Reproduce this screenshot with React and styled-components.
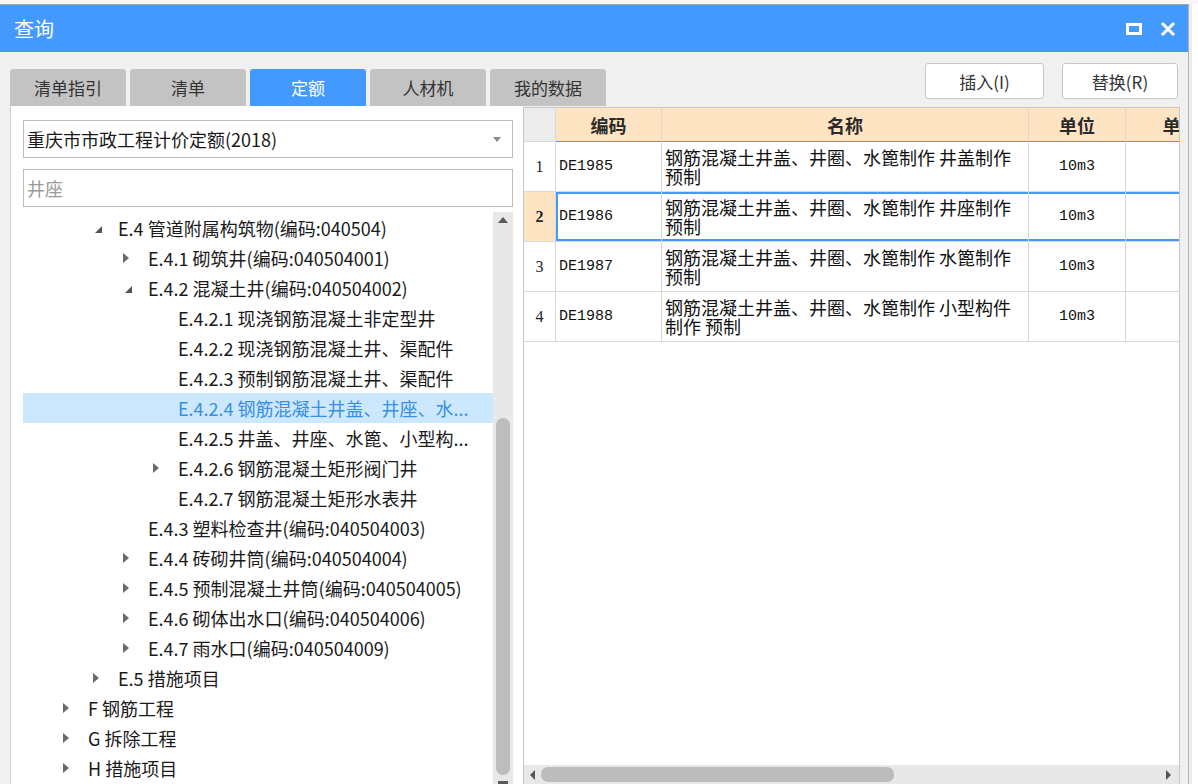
import React from "react";
import styled, { createGlobalStyle } from "styled-components";

const GlobalStyle = createGlobalStyle`
  body {
    margin: 0;
    background: #fafafa;
    font-family: "Noto Sans CJK SC", "Noto Sans", sans-serif;
  }
`;

const Screen = styled.div`
  width: 1198px;
  height: 784px;
  overflow: hidden;
  display: flex;
  padding-top: 4px;
  box-sizing: border-box;
  background: #f7f7f7;
`;

const Dialog = styled.div`
  width: 1189px;
  flex-shrink: 0;
  display: flex;
  flex-direction: column;
  border-top: 1px solid #a8a8a8;
  border-right: 1px solid #b4b4b4;
  box-sizing: border-box;
`;

const Backdrop = styled.div`
  flex: 1;
  background: #ffffff;
  border-left: 3px solid #ececec;
`;

const TitleBar = styled.div`
  height: 47px;
  flex-shrink: 0;
  background: #4499ff;
  display: flex;
  align-items: center;
  justify-content: space-between;
  padding: 0 12px 0 14px;
`;

const Title = styled.span`
  color: #ffffff;
  font-size: 20px;
`;

const WindowButtons = styled.div`
  display: flex;
  align-items: center;
  gap: 18px;
`;

const Body = styled.div`
  flex: 1;
  min-height: 0;
  display: flex;
  flex-direction: column;
  background: #f0f0f0;
  padding: 0 8px 0 10px;
`;

const Toolbar = styled.div`
  height: 54px;
  flex-shrink: 0;
  display: flex;
  justify-content: space-between;
`;

const TabStrip = styled.div`
  align-self: flex-end;
  display: flex;
  gap: 4px;
`;

const Tab = styled.div`
  width: 116px;
  height: 37px;
  border-radius: 3px 3px 0 0;
  background: ${(p) => (p.active ? "#4499ff" : "#c3c3c3")};
  color: ${(p) => (p.active ? "#ffffff" : "#333333")};
  font-size: 17px;
  display: flex;
  align-items: center;
  justify-content: center;
`;

const ActionGroup = styled.div`
  display: flex;
  gap: 18px;
  padding: 11px 2px 0 0;
`;

const ActionButton = styled.div`
  width: ${(p) => p.w}px;
  height: 36px;
  box-sizing: border-box;
  background: #ffffff;
  border: 1px solid #c6c6c6;
  border-radius: 3px;
  color: #333333;
  font-size: 17px;
  display: flex;
  align-items: center;
  justify-content: center;
`;

const Main = styled.div`
  flex: 1;
  min-height: 0;
  display: flex;
`;

const LeftPanel = styled.div`
  width: 513px;
  flex-shrink: 0;
  box-sizing: border-box;
  background: #ffffff;
  border-left: 1px solid #d2d2d2;
  padding: 14px 10px 0 12px;
  display: flex;
  flex-direction: column;
`;

const SelectBox = styled.div`
  height: 38px;
  flex-shrink: 0;
  box-sizing: border-box;
  border: 1px solid #bdbdbd;
  display: flex;
  align-items: center;
  justify-content: space-between;
  padding: 0 11px 0 3px;
  font-size: 18px;
  color: #1a1a1a;
`;

const SearchBox = styled.div`
  height: 38px;
  flex-shrink: 0;
  margin-top: 11px;
  box-sizing: border-box;
  border: 1px solid #bdbdbd;
  display: flex;
  align-items: center;
  padding-left: 3px;
  font-size: 18px;
  color: #9b9b9b;
`;

const TreeArea = styled.div`
  flex: 1;
  min-height: 0;
  margin-top: 5px;
  display: flex;
`;

const TreeList = styled.div`
  flex: 1;
  padding-top: 1px;
  overflow: hidden;
`;

const TreeRow = styled.div`
  height: 30px;
  display: flex;
  align-items: center;
  padding-left: ${(p) => 40 + p.level * 30}px;
  background: ${(p) => (p.selected ? "#cce8ff" : "transparent")};
  color: ${(p) => (p.selected ? "#3a8ee6" : "#1a1a1a")};
`;

const Toggle = styled.span`
  width: 25px;
  flex-shrink: 0;
  display: flex;
  align-items: center;
`;

const TreeLabel = styled.span`
  font-size: 18px;
  white-space: nowrap;
`;

const VScroll = styled.div`
  width: 20px;
  flex-shrink: 0;
  background: #e8e8e8;
  display: flex;
  flex-direction: column;
  align-items: center;
`;

const ScrollArrow = styled.div`
  height: ${(p) => p.h}px;
  display: flex;
  align-items: ${(p) => (p.bottom ? "flex-end" : "center")};
  justify-content: center;
  flex-shrink: 0;
`;

const VThumb = styled.div`
  width: 14px;
  height: 357px;
  margin-top: ${(p) => p.offset}px;
  flex-shrink: 0;
  border-radius: 7px;
  background: #bdbdbd;
`;

const Grid = styled.div`
  flex: 1;
  min-width: 0;
  margin-top: 1px;
  background: #ffffff;
  border: 1px solid #c8c8c8;
  border-bottom: none;
  display: flex;
  flex-direction: column;
  overflow: hidden;
`;

const GridRow = styled.div`
  display: flex;
  height: ${(p) => p.h}px;
  flex-shrink: 0;
`;

const Cell = styled.div`
  width: ${(p) => p.w}px;
  flex-shrink: 0;
  box-sizing: border-box;
  border-right: 1px solid #d8d8d8;
  border-bottom: 1px solid #d8d8d8;
  display: flex;
  align-items: center;
  justify-content: ${(p) => (p.center ? "center" : "flex-start")};
  padding: 0 3px;
`;

const HeadCell = styled(Cell)`
  background: ${(p) => (p.corner ? "#ececec" : "#ffe4c4")};
  border-bottom-color: ${(p) => (p.corner ? "#d8d8d8" : "#4a9bff")};
  font-size: 18px;
  font-weight: 700;
  color: #2a2a2a;
  white-space: nowrap;
`;

const NumCell = styled(Cell)`
  background: ${(p) => (p.selected ? "#ffe4c4" : "#ffffff")};
  font-family: "Liberation Serif", serif;
  font-size: 16px;
  font-weight: ${(p) => (p.selected ? 700 : 400)};
  color: #222222;
`;

const DataCell = styled(Cell)`
  font-size: ${(p) => (p.mono ? 15 : 18)}px;
  font-family: ${(p) =>
    p.mono
      ? `"Liberation Mono", monospace`
      : `"Noto Sans CJK SC", sans-serif`};
  line-height: 19px;
  color: #111111;
  box-shadow: ${(p) =>
    p.selected
      ? `inset 0 2px 0 #4499ff, inset 0 -2px 0 #4499ff${
          p.first ? ", inset 2px 0 0 #4499ff" : ""
        }`
      : "none"};
`;

const GridFill = styled.div`
  flex: 1;
`;

const HScroll = styled.div`
  height: 19px;
  flex-shrink: 0;
  background: #e8e8e8;
  display: flex;
  align-items: center;
  padding: 0 8px 0 6px;
`;

const HThumb = styled.div`
  width: 353px;
  height: 15px;
  margin-left: 6px;
  border-radius: 7px;
  background: #bcbcbc;
`;

const HSpacer = styled.div`
  flex: 1;
`;

const COLS = [32, 106, 367, 97, 110];

const treeItems = [
  { level: 1, label: "E.4 管道附属构筑物(编码:040504)", toggle: "open" },
  { level: 2, label: "E.4.1 砌筑井(编码:040504001)", toggle: "closed" },
  { level: 2, label: "E.4.2 混凝土井(编码:040504002)", toggle: "open" },
  { level: 3, label: "E.4.2.1 现浇钢筋混凝土非定型井" },
  { level: 3, label: "E.4.2.2 现浇钢筋混凝土井、渠配件" },
  { level: 3, label: "E.4.2.3 预制钢筋混凝土井、渠配件" },
  { level: 3, label: "E.4.2.4 钢筋混凝土井盖、井座、水...", selected: true },
  { level: 3, label: "E.4.2.5 井盖、井座、水篦、小型构..." },
  { level: 3, label: "E.4.2.6 钢筋混凝土矩形阀门井", toggle: "closed" },
  { level: 3, label: "E.4.2.7 钢筋混凝土矩形水表井" },
  { level: 2, label: "E.4.3 塑料检查井(编码:040504003)" },
  { level: 2, label: "E.4.4 砖砌井筒(编码:040504004)", toggle: "closed" },
  { level: 2, label: "E.4.5 预制混凝土井筒(编码:040504005)", toggle: "closed" },
  { level: 2, label: "E.4.6 砌体出水口(编码:040504006)", toggle: "closed" },
  { level: 2, label: "E.4.7 雨水口(编码:040504009)", toggle: "closed" },
  { level: 1, label: "E.5 措施项目", toggle: "closed" },
  { level: 0, label: "F 钢筋工程", toggle: "closed" },
  { level: 0, label: "G 拆除工程", toggle: "closed" },
  { level: 0, label: "H 措施项目", toggle: "closed" },
];

const rows = [
  { code: "DE1985", name: "钢筋混凝土井盖、井圈、水篦制作 井盖制作 预制" },
  { code: "DE1986", name: "钢筋混凝土井盖、井圈、水篦制作 井座制作 预制" },
  { code: "DE1987", name: "钢筋混凝土井盖、井圈、水篦制作 水篦制作 预制" },
  { code: "DE1988", name: "钢筋混凝土井盖、井圈、水篦制作 小型构件制作 预制" },
];

const tabs = ["清单指引", "清单", "定额", "人材机", "我的数据"];

function ToggleIcon({ kind }) {
  if (kind === "open") {
    return (
      <svg width="7" height="7" viewBox="0 0 7 7" style={{ marginLeft: 2, marginTop: 3 }}>
        <polygon points="7,0 7,7 0,7" fill="#555" />
      </svg>
    );
  }
  if (kind === "closed") {
    return (
      <svg width="6" height="10" viewBox="0 0 6 10">
        <polygon points="0,0 6,5 0,10" fill="#6a6a6a" />
      </svg>
    );
  }
  return null;
}

export default function App() {
  return (
    <Screen>
      <GlobalStyle />
      <Dialog>
        <TitleBar>
          <Title>查询</Title>
          <WindowButtons>
            <svg width="16" height="12" viewBox="0 0 16 12">
              <rect x="1.5" y="1.5" width="13" height="9" fill="none" stroke="#fff" strokeWidth="3" />
            </svg>
            <svg width="16" height="16" viewBox="0 0 16 16">
              <path d="M2 2 L14 14 M14 2 L2 14" stroke="#fff" strokeWidth="3" />
            </svg>
          </WindowButtons>
        </TitleBar>
        <Body>
          <Toolbar>
            <TabStrip>
              {tabs.map((t) => (
                <Tab key={t} active={t === "定额"}>
                  {t}
                </Tab>
              ))}
            </TabStrip>
            <ActionGroup>
              <ActionButton w={119}>插入(I)</ActionButton>
              <ActionButton w={116}>替换(R)</ActionButton>
            </ActionGroup>
          </Toolbar>
          <Main>
            <LeftPanel>
              <SelectBox>
                <span>重庆市市政工程计价定额(2018)</span>
                <svg width="8" height="5" viewBox="0 0 8 5">
                  <polygon points="0,0 8,0 4,5" fill="#8a8a8a" />
                </svg>
              </SelectBox>
              <SearchBox>井座</SearchBox>
              <TreeArea>
                <TreeList>
                  {treeItems.map((item) => (
                    <TreeRow key={item.label} level={item.level} selected={item.selected}>
                      <Toggle>
                        <ToggleIcon kind={item.toggle} />
                      </Toggle>
                      <TreeLabel>{item.label}</TreeLabel>
                    </TreeRow>
                  ))}
                </TreeList>
                <VScroll>
                  <ScrollArrow h={16}>
                    <svg width="10" height="6" viewBox="0 0 10 6">
                      <polygon points="0,6 10,6 5,0" fill="#5a5a5a" />
                    </svg>
                  </ScrollArrow>
                  <VThumb offset={190} />
                  <ScrollArrow h={9} bottom>
                    <svg width="10" height="3" viewBox="0 0 10 3">
                      <rect x="0" y="0" width="10" height="3" fill="#5a5a5a" />
                    </svg>
                  </ScrollArrow>
                </VScroll>
              </TreeArea>
            </LeftPanel>
            <Grid>
              <GridRow h={34}>
                <HeadCell w={COLS[0]} corner />
                <HeadCell w={COLS[1]} center>编码</HeadCell>
                <HeadCell w={COLS[2]} center>名称</HeadCell>
                <HeadCell w={COLS[3]} center>单位</HeadCell>
                <HeadCell w={COLS[4]} center>单价</HeadCell>
              </GridRow>
              {rows.map((r, i) => {
                const sel = i === 1;
                return (
                  <GridRow h={50} key={r.code}>
                    <NumCell w={COLS[0]} center selected={sel}>
                      {i + 1}
                    </NumCell>
                    <DataCell w={COLS[1]} mono selected={sel} first>
                      {r.code}
                    </DataCell>
                    <DataCell w={COLS[2]} selected={sel}>
                      {r.name}
                    </DataCell>
                    <DataCell w={COLS[3]} mono center selected={sel}>
                      10m3
                    </DataCell>
                    <DataCell w={COLS[4]} selected={sel} />
                  </GridRow>
                );
              })}
              <GridFill />
              <HScroll>
                <svg width="5" height="10" viewBox="0 0 5 10">
                  <polygon points="5,0 5,10 0,5" fill="#555" />
                </svg>
                <HThumb />
                <HSpacer />
                <svg width="5" height="10" viewBox="0 0 5 10">
                  <polygon points="0,0 0,10 5,5" fill="#555" />
                </svg>
              </HScroll>
            </Grid>
          </Main>
        </Body>
      </Dialog>
      <Backdrop />
    </Screen>
  );
}
